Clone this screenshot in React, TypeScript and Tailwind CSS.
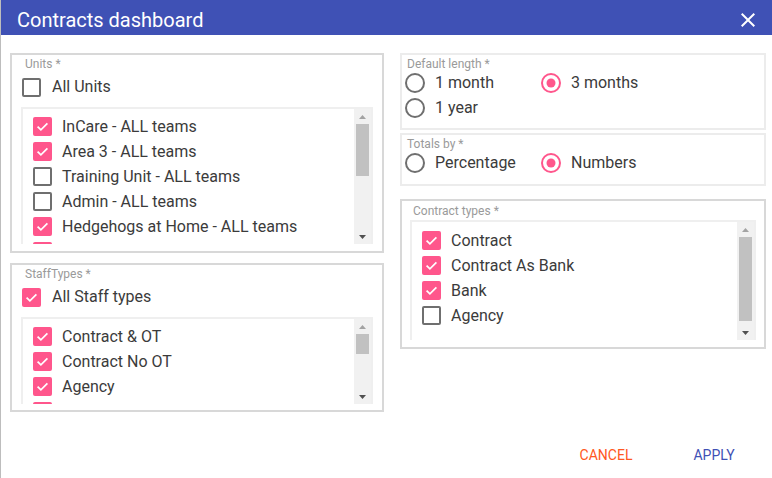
import React from "react";

const font = { fontFamily: "Roboto, 'Liberation Sans', sans-serif" };

const units = [
  { label: "InCare - ALL teams", on: true },
  { label: "Area 3 - ALL teams", on: true },
  { label: "Training Unit - ALL teams", on: false },
  { label: "Admin - ALL teams", on: false },
  { label: "Hedgehogs at Home - ALL teams", on: true },
  { label: "Nursing - ALL teams", on: true },
];

const staffTypes = [
  { label: "Contract & OT", on: true },
  { label: "Contract No OT", on: true },
  { label: "Agency", on: true },
  { label: "Bank", on: true },
];

const contractTypes = [
  { label: "Contract", on: true },
  { label: "Contract As Bank", on: true },
  { label: "Bank", on: true },
  { label: "Agency", on: false },
];

function Checkbox({ on }: { on: boolean }) {
  if (on) {
    return (
      <span className="flex h-[19px] w-[19px] shrink-0 items-center justify-center rounded-[2px] bg-[#ff568c]">
        <svg width="19" height="19" viewBox="0 0 19 19">
          <path d="M4.6 9.6 L7.9 12.9 L14.4 6.4" fill="none" stroke="#fff" strokeWidth="1.7" />
        </svg>
      </span>
    );
  }
  return <span className="h-[19px] w-[19px] shrink-0 rounded-[2px] border-2 border-[#6f6f6f] bg-white" />;
}

function Radio({ on }: { on: boolean }) {
  return (
    <svg width="20" height="20" viewBox="0 0 20 20" className="shrink-0">
      <circle cx="10" cy="10" r="9" fill="none" stroke={on ? "#ff568c" : "#6f6f6f"} strokeWidth="2" />
      {on && <circle cx="10" cy="10" r="4.5" fill="#ff568c" />}
    </svg>
  );
}

function Row({ label, on }: { label: string; on: boolean }) {
  return (
    <div className="flex h-[25px] shrink-0 items-center gap-[10px] text-[16px] text-[#3b3b3b]">
      <Checkbox on={on} />
      <span className="whitespace-nowrap">{label}</span>
    </div>
  );
}

function RadioItem({ label, on }: { label: string; on: boolean }) {
  return (
    <div className="flex h-[25px] items-center gap-[10px] text-[16px] text-[#3b3b3b]">
      <Radio on={on} />
      <span className="whitespace-nowrap">{label}</span>
    </div>
  );
}

function Scrollbar({ thumb }: { thumb: number }) {
  return (
    <div className="flex w-[17px] shrink-0 flex-col bg-[#f1f1f1]">
      <div className="flex h-[15px] items-center justify-center">
        <svg width="7" height="4" viewBox="0 0 7 4">
          <path d="M0 4 L3.5 0 L7 4 Z" fill="#a3a3a3" />
        </svg>
      </div>
      <div className="mx-[2px] bg-[#c1c1c1]" style={{ height: thumb }} />
      <div className="flex-1" />
      <div className="flex h-[15px] items-center justify-center">
        <svg width="7" height="4" viewBox="0 0 7 4">
          <path d="M0 0 L7 0 L3.5 4 Z" fill="#505050" />
        </svg>
      </div>
    </div>
  );
}

function List({ items, height, thumb, pt }: { items: { label: string; on: boolean }[]; height: number; thumb: number; pt: string }) {
  return (
    <div className="flex border-2 border-b-0 border-[#efefef]" style={{ height }}>
      <div className={`flex flex-1 flex-col overflow-hidden bg-white pl-[10px] ${pt}`}>
        {items.map((i) => (
          <Row key={i.label} {...i} />
        ))}
      </div>
      <Scrollbar thumb={thumb} />
    </div>
  );
}

// leading is passed in with className so two leading classes never clash
function Label({ children, className = "" }: { children: React.ReactNode; className?: string }) {
  return <div className={`text-[12px] text-[#9a9a9a] ${className}`}>{children}</div>;
}

export default function App() {
  return (
    <div style={font} className="flex h-[478px] w-[772px] flex-col border-l border-[#bdbdbd] bg-white">
      <div className="flex h-[35px] shrink-0 items-center justify-between bg-[#3f51b5] pl-[16px] pr-[12px]">
        <span className="pt-[4px] text-[20px] text-white">Contracts dashboard</span>
        <svg width="24" height="24" viewBox="0 0 24 24" className="mt-[4px]">
          <path
            d="M19 6.41L17.59 5 12 10.59 6.41 5 5 6.41 10.59 12 5 17.59 6.41 19 12 13.41 17.59 19 19 17.59 13.41 12z"
            fill="#fff"
          />
        </svg>
      </div>

      <div className="flex gap-[16px] pl-[9px] pr-[6px] pt-[18px]">
        <div className="flex w-[374px] flex-col gap-[10px]">
          <div className="border-2 border-[#d8d8d8] px-[9px] pb-[7px] pt-[2px]">
            <Label className="ml-[4px] leading-[14px]">Units *</Label>
            <div className="ml-[1px] mt-[6px] flex h-[20px] items-center gap-[11px] text-[16px] text-[#3b3b3b]">
              <Checkbox on={false} />
              <span>All Units</span>
            </div>
            <div className="mt-[10px]">
              <List items={units} height={137} thumb={52} pt="pt-[5px]" />
            </div>
          </div>

          <div className="border-2 border-[#d8d8d8] px-[9px] pb-[6px] pt-[2px]">
            <Label className="ml-[4px] leading-[14px]">StaffTypes *</Label>
            <div className="ml-[1px] mt-[6px] flex h-[20px] items-center gap-[11px] text-[16px] text-[#3b3b3b]">
              <Checkbox on={true} />
              <span>All Staff types</span>
            </div>
            <div className="mt-[10px]">
              <List items={staffTypes} height={87} thumb={20} pt="pt-[5px]" />
            </div>
          </div>
        </div>

        <div className="flex w-[366px] flex-col">
          <div className="border-2 border-[#ececec] px-[3px] pb-[8px] pt-[3px]">
            <Label className="ml-[2px] leading-[12px]">Default length *</Label>
            <div className="grid grid-cols-[136px_1fr]">
              <RadioItem label="1 month" on={false} />
              <RadioItem label="3 months" on={true} />
              <RadioItem label="1 year" on={false} />
            </div>
          </div>

          <div className="mt-[3px] border-2 border-[#ececec] px-[3px] pb-[9px] pt-[3px]">
            <Label className="ml-[2px] leading-[12px]">Totals by *</Label>
            <div className="grid grid-cols-[136px_1fr]">
              <RadioItem label="Percentage" on={false} />
              <RadioItem label="Numbers" on={true} />
            </div>
          </div>

          <div className="mt-[13px] border-2 border-[#d8d8d8] px-[8px] pb-[7px] pt-[3px]">
            <Label className="ml-[3px] leading-[14px]">Contract types *</Label>
            <div className="mt-[2px]">
              <List items={contractTypes} height={120} thumb={84} pt="pt-[6px]" />
            </div>
          </div>
        </div>
      </div>

      <div className="mb-[5px] mt-auto flex justify-end gap-[20px] pr-[14px]">
        <button className="flex h-[36px] w-[88px] items-center justify-center text-[14px] uppercase text-[#ff5722]">
          Cancel
        </button>
        <button className="flex h-[36px] w-[88px] items-center justify-center text-[14px] uppercase text-[#3f51b5]">
          Apply
        </button>
      </div>
    </div>
  );
}
